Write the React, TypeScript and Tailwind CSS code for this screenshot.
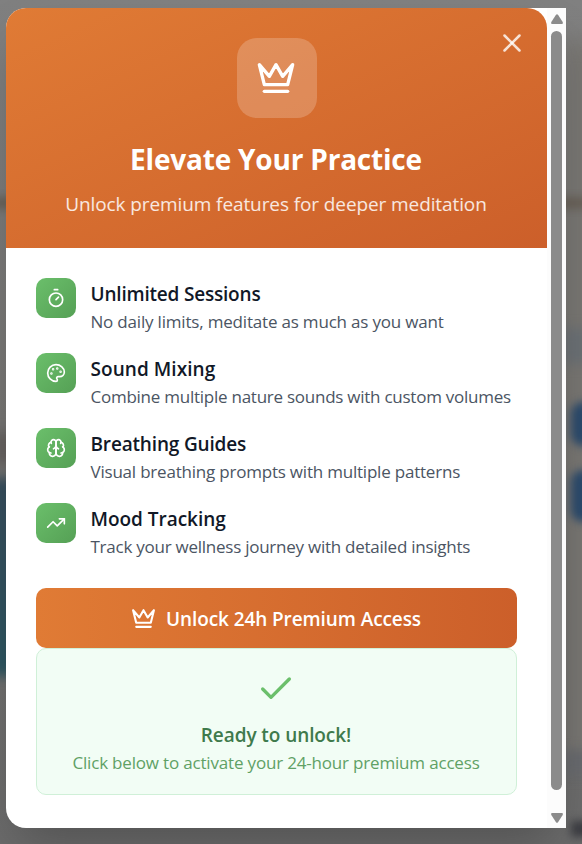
import type { ReactNode } from "react";

const stroke = {
  viewBox: "0 0 24 24",
  fill: "none",
  stroke: "currentColor",
  strokeWidth: 2,
  strokeLinecap: "round" as const,
  strokeLinejoin: "round" as const,
};

function Crown({ className }: { className: string }) {
  return (
    <svg {...stroke} className={className}>
      <path d="m2 4 3 12h14l3-12-6 7-4-7-4 7-6-7z" />
      <path d="M5 20h14" />
    </svg>
  );
}

const features: { title: string; titleClass: string; text: string; textClass: string; icon: ReactNode }[] = [
  {
    title: "Unlimited Sessions",
    titleClass: "tracking-[-0.2px]",
    text: "No daily limits, meditate as much as you want",
    textClass: "tracking-[-0.19px]",
    icon: (
      <>
        <path d="M10 2h4" />
        <path d="m12 14 3-3" />
        <circle cx="12" cy="14" r="8" />
      </>
    ),
  },
  {
    title: "Sound Mixing",
    titleClass: "tracking-[0.05px]",
    text: "Combine multiple nature sounds with custom volumes",
    textClass: "tracking-[-0.25px]",
    icon: (
      <>
        <circle cx="13.5" cy="6.5" r=".5" fill="currentColor" />
        <circle cx="17.5" cy="10.5" r=".5" fill="currentColor" />
        <circle cx="8.5" cy="7.5" r=".5" fill="currentColor" />
        <circle cx="6.5" cy="12.5" r=".5" fill="currentColor" />
        <path d="M12 2C6.5 2 2 6.5 2 12s4.5 10 10 10c.926 0 1.648-.746 1.648-1.688 0-.437-.18-.835-.437-1.125-.29-.289-.438-.652-.438-1.125a1.64 1.64 0 0 1 1.668-1.668h1.996c3.051 0 5.555-2.503 5.555-5.554C21.965 6.012 17.461 2 12 2z" />
      </>
    ),
  },
  {
    title: "Breathing Guides",
    titleClass: "tracking-[-0.17px]",
    text: "Visual breathing prompts with multiple patterns",
    textClass: "tracking-[-0.21px]",
    icon: (
      <>
        <path d="M12 5a3 3 0 1 0-5.997.125 4 4 0 0 0-2.526 5.77 4 4 0 0 0 .556 6.588A4 4 0 1 0 12 18Z" />
        <path d="M12 5a3 3 0 1 1 5.997.125 4 4 0 0 1 2.526 5.77 4 4 0 0 1-.556 6.588A4 4 0 1 1 12 18Z" />
        <path d="M15 13a4.5 4.5 0 0 1-3-4 4.5 4.5 0 0 1-3 4" />
        <path d="M17.599 6.5a3 3 0 0 0 .399-1.375" />
        <path d="M6.003 5.125A3 3 0 0 0 6.401 6.5" />
        <path d="M3.477 10.896a4 4 0 0 1 .585-.396" />
        <path d="M19.938 10.5a4 4 0 0 1 .585.396" />
        <path d="M6 18a4 4 0 0 1-1.967-.516" />
        <path d="M19.967 17.484A4 4 0 0 1 18 18" />
      </>
    ),
  },
  {
    title: "Mood Tracking",
    titleClass: "tracking-[-0.03px]",
    text: "Track your wellness journey with detailed insights",
    textClass: "tracking-[-0.25px]",
    icon: (
      <>
        <path d="m22 7-8.500 8.500-5-5L2 17" />
        <path d="M16 7h6v6" />
      </>
    ),
  },
];

function Backdrop() {
  return (
    <div className="absolute inset-0 overflow-hidden bg-linear-to-b from-[#808080] via-[#767573] to-[#6b6b6b]">
      <div className="absolute left-[562px] top-[40px] h-[720px] w-10 bg-[#787672] blur-[10px]" />
      <div className="absolute -left-4 top-[197px] h-3 w-[620px] bg-[#686158] blur-[4px]" />
      <div className="absolute left-[562px] top-[328px] h-[36px] w-10 bg-[#6b7074] blur-[6px]" />
      <div className="absolute left-[562px] top-[750px] h-[26px] w-10 bg-[#686a6e] blur-[6px]" />
      <div className="absolute -left-20 top-[432px] h-8 w-[120px] bg-[#666260] blur-[6px]" />
      <div className="absolute -left-20 top-[478px] h-[198px] w-[120px] bg-linear-to-b from-[#374d5c] to-[#2d5560] blur-[6px]" />
      <div className="absolute left-[571px] top-[402px] h-[44px] w-20 rounded-xl bg-[#2b4a6c] blur-[4px]" />
      <div className="absolute left-[571px] top-[470px] h-[52px] w-20 rounded-xl bg-[#2b4a6c] blur-[4px]" />
      <div className="absolute left-[571px] top-[821px] h-4 w-20 bg-[#3c3d42] blur-[4px]" />
    </div>
  );
}

export default function App() {
  return (
    <div className="relative h-[844px] w-[582px] overflow-hidden font-['Open_Sans','Noto_Sans',sans-serif]">
      <Backdrop />
      <div className="relative pl-[6px] pt-2">
        <div className="flex h-[820px] w-[560px] overflow-hidden rounded-l-[20px] bg-white shadow-[0_25px_50px_-12px_rgba(0,0,0,0.25)]">
          <div className="w-[541px]">
            <header className="relative flex h-60 flex-col items-center rounded-tr-[20px] bg-linear-to-br from-[#e07b35] to-[#cc5f2a] pr-px pt-[30px] text-white">
              <button aria-label="Close" className="absolute right-5 top-5 text-white/80">
                <svg {...stroke} className="size-[30px]">
                  <path d="M18 6 6 18" />
                  <path d="m6 6 12 12" />
                </svg>
              </button>
              <div className="ml-px flex size-20 items-center justify-center rounded-[20px] bg-white/20 pr-px">
                <Crown className="size-10" />
              </div>
              <h1 className="mt-[21px] whitespace-nowrap text-[28px] font-bold leading-10 tracking-[-0.2px]">Elevate Your Practice</h1>
              <p className="mt-[10px] whitespace-nowrap text-[19px] leading-[30px] text-white/85 tracking-[-0.1px]">
                Unlock premium features for deeper meditation
              </p>
            </header>

            <main className="p-[30px]">
              <ul className="flex flex-col gap-5">
                {features.map((f) => (
                  <li key={f.title} className="flex h-[55px] gap-[14.5px]">
                    <div className="flex size-10 shrink-0 items-center justify-center rounded-[10px] bg-linear-to-br from-[#6bbf6b] to-[#55a055] text-white">
                      <svg {...stroke} className="size-5">{f.icon}</svg>
                    </div>
                    <div className="whitespace-nowrap pt-px">
                      <h3 className={`text-[19px] font-semibold leading-[30px] text-[#111827] ${f.titleClass}`}>{f.title}</h3>
                      <p className={`text-[17px] leading-[25px] text-[#4b5563] ${f.textClass}`}>{f.text}</p>
                    </div>
                  </li>
                ))}
              </ul>

              <button className="mt-[30px] flex h-[60px] w-full items-center justify-center gap-[10px] rounded-[10px] bg-linear-to-r from-[#e07b35] to-[#cc5f2a] pr-px text-white">
                <Crown className="size-[25px]" />
                <span className="whitespace-nowrap pt-0.5 text-[19px] font-semibold tracking-[-0.09px]">Unlock 24h Premium Access</span>
              </button>

              <section className="flex h-[147px] flex-col items-center rounded-[10px] border border-[#d0f0d8] bg-[#f2fdf5] pr-px pt-5">
                <svg {...stroke} className="size-10 text-[#6bbf6b]">
                  <path d="M20 6 9 17l-5-5" />
                </svg>
                <p className="mt-[11px] whitespace-nowrap text-[19px] font-semibold leading-[30px] tracking-[-0.08px] text-[#3f7a4c]">Ready to unlock!</p>
                <p className="whitespace-nowrap text-[17px] leading-[25px] tracking-[-0.18px] text-[#5fa165]">
                  Click below to activate your 24-hour premium access
                </p>
              </section>
            </main>
          </div>

          <div className="flex w-[19px] flex-col items-center bg-[#fcfcfc] pt-[6px]">
            <svg viewBox="0 0 12 10" className="h-[10px] w-3 fill-[#8b8b8b]">
              <path d="M5 .8Q6-.4 7 .8l4.700 7.200Q12.300 10 11 10H1Q-.3 10 .3 8z" />
            </svg>
            <div className="mt-[7px] h-[759px] w-[11px] rounded-full bg-[#8b8b8b]" />
            <svg viewBox="0 0 12 10" className="mt-[23px] h-[10px] w-3 fill-[#8b8b8b]">
              <path d="M5 9.200Q6 10.400 7 9.200L11.700 2Q12.300 0 11 0H1Q-.3 0 .3 2z" />
            </svg>
          </div>
        </div>
      </div>
    </div>
  );
}
